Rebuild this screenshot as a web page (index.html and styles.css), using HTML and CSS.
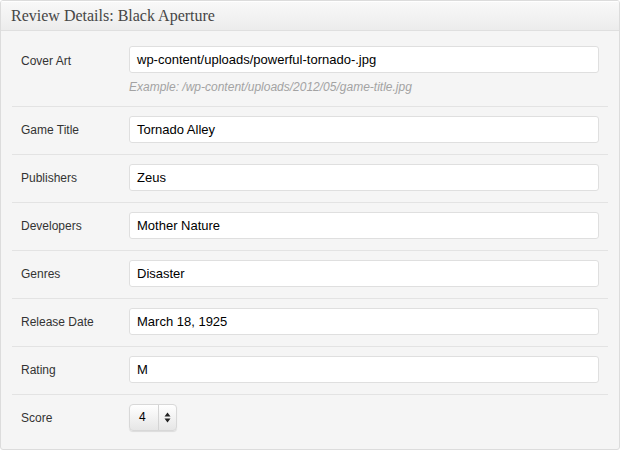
FILE: index.html
```html
<!DOCTYPE html>
<html>
<head>
<meta charset="utf-8">
<link rel="stylesheet" href="styles.css">
</head>
<body>
<div class="panel">
  <div class="panel-head">Review Details: Black Aperture</div>
  <div class="panel-body">
    <div class="row first">
      <div class="label">Cover Art</div>
      <div class="field">
        <div class="input">wp-content/uploads/powerful-tornado-.jpg</div>
        <div class="help">Example: /wp-content/uploads/2012/05/game-title.jpg</div>
      </div>
    </div>
    <div class="row">
      <div class="label">Game Title</div>
      <div class="field"><div class="input">Tornado Alley</div></div>
    </div>
    <div class="row">
      <div class="label">Publishers</div>
      <div class="field"><div class="input">Zeus</div></div>
    </div>
    <div class="row">
      <div class="label">Developers</div>
      <div class="field"><div class="input">Mother Nature</div></div>
    </div>
    <div class="row">
      <div class="label">Genres</div>
      <div class="field"><div class="input">Disaster</div></div>
    </div>
    <div class="row">
      <div class="label">Release Date</div>
      <div class="field"><div class="input">March 18, 1925</div></div>
    </div>
    <div class="row">
      <div class="label">Rating</div>
      <div class="field"><div class="input">M</div></div>
    </div>
    <div class="row">
      <div class="label">Score</div>
      <div class="field">
        <div class="select">
          <span class="sel-val">4</span>
          <span class="sel-arrows">
            <svg width="7" height="11" viewBox="0 0 7 11"><path d="M3.5 0.5 L6.5 4.5 L0.5 4.5 Z M3.5 10.5 L6.5 6.5 L0.5 6.5 Z" fill="#222"/></svg>
          </span>
        </div>
      </div>
    </div>
  </div>
</div>
</body>
</html>
```
FILE: styles.css
```css
html, body {
  margin: 0;
  padding: 0;
  background: #ffffff;
}
body {
  font-family: "Liberation Sans", Arial, sans-serif;
}
.panel {
  width: 618px;
  height: 448px;
  border: 1px solid #dcdcdc;
  border-radius: 3px;
  background: #f5f5f5;
  box-sizing: content-box;
  overflow: hidden;
}
.panel-head {
  height: 29px;
  border-bottom: 1px solid #dfdfdf;
  background: linear-gradient(#f9f9f9, #ececec);
  font-family: Georgia, "Liberation Serif", serif;
  font-size: 16px;
  color: #464646;
  padding-left: 10px;
  line-height: 30px;
  box-shadow: inset 0 1px 0 #fff;
}
.panel-body {
  padding: 0 11px 0 11px;
}
.row {
  display: flex;
  align-items: flex-start;
  border-top: 1px solid #e3e3e3;
  padding: 9px 0 11px;
}
.row.first {
  border-top: none;
  padding: 15px 0 12px;
}
.label {
  width: 117px;
  height: 27px;
  flex: none;
  padding-left: 9px;
  padding-top: 1px;
  box-sizing: border-box;
  font-size: 12px;
  color: #333;
  line-height: 27px;
  overflow: visible;
}
.row.first .label {
  padding-top: 2px;
}
.field {
  flex: 1;
  padding-right: 9px;
}
.input {
  height: 25px;
  border: 1px solid #dfdfdf;
  border-radius: 3px;
  background: #fff;
  font-size: 13px;
  color: #000;
  line-height: 25px;
  padding-left: 7px;
}
.help {
  margin-top: 7px;
  font-size: 12px;
  font-style: italic;
  color: #a3a3a3;
  line-height: 14px;
}
.select {
  display: flex;
  width: 46px;
  height: 25px;
  border: 1px solid #d8d8d8;
  border-radius: 4px;
  background: linear-gradient(#ffffff, #e6e6e6);
  box-shadow: 0 1px 1px rgba(0,0,0,0.1);
  font-size: 12px;
  line-height: 25px;
}
.sel-val {
  width: 29px;
  padding-left: 9px;
  box-sizing: border-box;
  border-right: 1px solid #d4d4d4;
}
.sel-arrows {
  flex: 1;
  display: flex;
  align-items: center;
  justify-content: center;
}
```
